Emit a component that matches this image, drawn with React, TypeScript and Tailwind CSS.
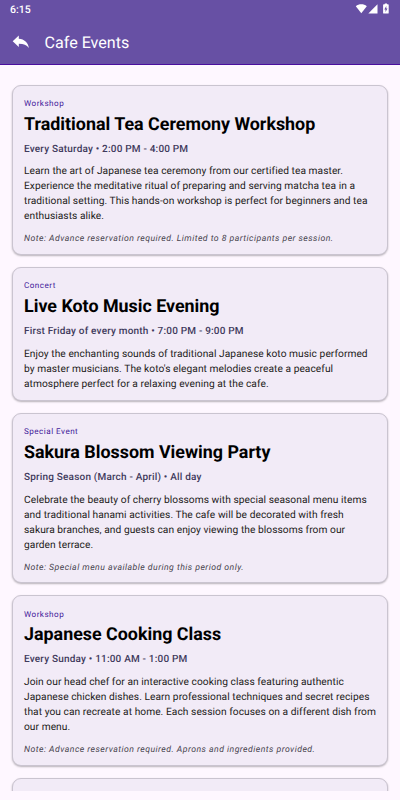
type CafeEvent = {
  type: string;
  title: string;
  date: string;
  description: string[];
  note?: string;
};

const events: CafeEvent[] = [
  {
    type: "Workshop",
    title: "Traditional Tea Ceremony Workshop",
    date: "Every Saturday • 2:00 PM - 4:00 PM",
    description: [
      "Learn the art of Japanese tea ceremony from our certified tea master.",
      "Experience the meditative ritual of preparing and serving matcha tea in a",
      "traditional setting. This hands-on workshop is perfect for beginners and tea",
      "enthusiasts alike.",
    ],
    note: "Note: Advance reservation required. Limited to 8 participants per session.",
  },
  {
    type: "Concert",
    title: "Live Koto Music Evening",
    date: "First Friday of every month • 7:00 PM - 9:00 PM",
    description: [
      "Enjoy the enchanting sounds of traditional Japanese koto music performed",
      "by master musicians. The koto's elegant melodies create a peaceful",
      "atmosphere perfect for a relaxing evening at the cafe.",
    ],
  },
  {
    type: "Special Event",
    title: "Sakura Blossom Viewing Party",
    date: "Spring Season (March - April) • All day",
    description: [
      "Celebrate the beauty of cherry blossoms with special seasonal menu items",
      "and traditional hanami activities. The cafe will be decorated with fresh",
      "sakura branches, and guests can enjoy viewing the blossoms from our",
      "garden terrace.",
    ],
    note: "Note: Special menu available during this period only.",
  },
  {
    type: "Workshop",
    title: "Japanese Cooking Class",
    date: "Every Sunday • 11:00 AM - 1:00 PM",
    description: [
      "Join our head chef for an interactive cooking class featuring authentic",
      "Japanese chicken dishes. Learn professional techniques and secret recipes",
      "that you can recreate at home. Each session focuses on a different dish from",
      "our menu.",
    ],
    note: "Note: Advance reservation required. Aprons and ingredients provided.",
  },
];

const cardClass =
  "shrink-0 rounded-[9px] border border-[#cac4d0] bg-[#f2ebf7] shadow-[0_1px_2px_rgba(0,0,0,0.28)]";

const StatusBar = () => (
  <div className="flex h-[18px] items-center justify-between pl-[10px] pr-[10px] text-white">
    <span className="mt-px text-[10.5px] leading-[18px] font-medium">6:15</span>
    <svg width="35" height="12" viewBox="0 0 35 12" fill="currentColor">
      <path d="M0.8 3.2C3.8 0.6 8.8 0.6 11.8 3.2L6.3 10.2Z" />
      <path d="M22.5 1.3V10.5H13.3Z" />
      <path
        fillRule="evenodd"
        d="M28.8 1.3H29.8V0.4H32V1.3H33Q33.7 1.3 33.7 2V10Q33.7 10.6 33 10.6H28.8Q28.1 10.6 28.1 10V2Q28.1 1.3 28.8 1.3ZM31.3 3L29.3 6.5H30.5V9L32.5 5.4H31.3Z"
      />
    </svg>
  </div>
);

const Toolbar = () => (
  <div className="flex h-[47px] items-center border-b border-[#4a0e9e] pt-[2px] pl-3">
    <svg width="18" height="14" viewBox="0 0 18 14" fill="#fff">
      <path d="M6.8 0.4V3.7C12.4 4.2 16 7.4 16.9 12.9C14.6 10.1 11.8 8.8 6.8 8.8V12L0.7 6.3Z" />
    </svg>
    <h1 className="mt-[2px] ml-[14.5px] text-[16.1px] leading-none text-white">
      Cafe Events
    </h1>
  </div>
);

const EventCard = ({ event }: { event: CafeEvent }) => (
  <article className={`${cardClass} px-[11px] pt-[11.2px] pb-[8.6px]`}>
    <p className="text-[8.1px] leading-3 tracking-[0.48px] text-[#43209a]">
      {event.type}
    </p>
    <h2 className="mt-[3.7px] text-[17.87px] leading-6 font-bold whitespace-nowrap text-black">
      {event.title}
    </h2>
    <p className="mt-[5.1px] text-[10px] leading-[15px] font-medium tracking-[0.19px] text-[#3f3a5c]">
      {event.date}
    </p>
    <div className="mt-[7.7px] text-[10.2px] leading-[15px] tracking-[0.06px] whitespace-nowrap text-[#1d1b20]">
      {event.description.map((line) => (
        <p key={line}>{line}</p>
      ))}
    </div>
    {event.note && (
      <p className="mt-[9px] text-[8.7px] leading-3 tracking-[0.47px] italic text-[#49454f]">
        {event.note}
      </p>
    )}
  </article>
);

const App = () => (
  <div className="flex h-[800px] w-[400px] flex-col overflow-hidden bg-[#fef7ff] font-[Roboto,sans-serif] [text-rendering:geometricPrecision]">
    <header className="shrink-0 bg-[#6750a4]">
      <StatusBar />
      <Toolbar />
    </header>
    <main className="flex h-[726px] flex-col gap-3 overflow-hidden px-3 pt-[19.7px]">
      {events.map((event) => (
        <EventCard key={event.title} event={event} />
      ))}
      <div className={`${cardClass} h-[170px]`} />
    </main>
  </div>
);

export default App;
